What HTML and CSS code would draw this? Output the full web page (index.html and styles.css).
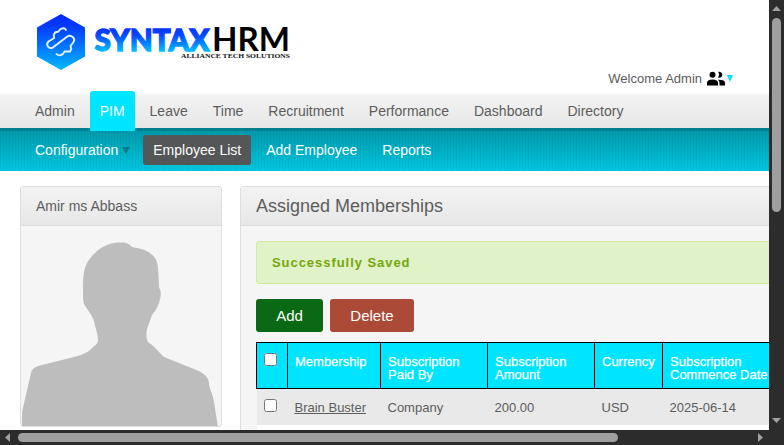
FILE: index.html
```html
<!DOCTYPE html>
<html lang="en">
<head>
<meta charset="utf-8">
<title>Assigned Memberships</title>
<link rel="stylesheet" href="styles.css">
</head>
<body>
<div class="window">
  <div class="page">
    <header class="header">
      <svg class="logo" width="262" height="62" viewBox="32 10 262 62">
        <defs>
          <linearGradient id="hex" x1="0" y1="0" x2="0" y2="1"><stop offset="0" stop-color="#0528ff"/><stop offset=".2" stop-color="#0538ff"/><stop offset="1" stop-color="#00b8ff"/></linearGradient>
          <linearGradient id="word" gradientUnits="userSpaceOnUse" x1="0" y1="27" x2="0" y2="51"><stop offset="0" stop-color="#0830ff"/><stop offset=".35" stop-color="#0848ff"/><stop offset="1" stop-color="#00bcff"/></linearGradient>
        </defs>
        <path d="M61 14L85 27.500V56.500L61 70L37 56.500V27.500Z" fill="url(#hex)"/>
        <path d="M66 30C64.500 27 60 28 58.500 31.500L55 32.500L53.700 35L54.200 38L48.500 41.500C45.500 44.500 48 49 52.500 47.800L67 36.700C71 34 76 38.500 73.500 42L70.500 46L71.300 49L70 51.500L64.500 51.500C63 55.500 58.500 56.500 56.500 54" fill="none" stroke="#e5f2ff" stroke-width="1.900" stroke-linejoin="round" stroke-linecap="round"/>
        <text class="logo-syntax" x="94.500" y="50.500" textLength="115" lengthAdjust="spacingAndGlyphs" fill="url(#word)" stroke="url(#word)">SYNTAX</text>
        <text class="logo-hrm" x="212" y="51" textLength="78" lengthAdjust="spacingAndGlyphs">HRM</text>
        <text class="logo-tag" x="181" y="58" textLength="109" lengthAdjust="spacingAndGlyphs">ALLIANCE TECH SOLUTIONS</text>
      </svg>
      <div class="welcome">
        <span>Welcome Admin</span>
        <svg width="18" height="15" viewBox="0 0 18 15"><circle cx="5.500" cy="3.700" r="3"/><path d="M11 .8C13.500 .2 15.300 1.700 15.300 3.700S13.500 7.200 11 6.500C12.400 4.800 12.400 2.500 11 .8ZM0 14.500V12Q0 8.500 5.500 8.500T11 12V14.500ZM12.500 14.500V12Q12.500 9.800 10.800 8.700Q18 8.400 18 12V14.500Z"/></svg>
        <svg class="caret" width="6" height="7" viewBox="0 0 6 7"><path d="M0 0H6L3 7Z" fill="#00e5ff"/></svg>
      </div>
    </header>
    <nav class="menu">
      <a>Admin</a><a class="current">PIM</a><a>Leave</a><a>Time</a><a>Recruitment</a><a>Performance</a><a>Dashboard</a><a>Directory</a>
    </nav>
    <nav class="submenu">
      <a>Configuration<svg class="arrow" width="8" height="7" viewBox="0 0 8 7"><path d="M0 0H8L4 7Z" fill="#087c8a"/></svg></a><a class="selected">Employee List</a><a>Add Employee</a><a>Reports</a>
    </nav>
    <main class="content">
      <section class="box profile">
        <h2>Amir ms Abbass</h2>
        <svg class="photo" width="200" height="200" viewBox="0 0 200 200">
          <path d="M1 200V185L10 146Q11 141 17 139L47 131.500C62 128 68 125 72 120Q77 117 77 113C77 107 74 100 73 94C71 88 66 82 63 77Q62 74 62 63C62 42 64 36 74 26C85 15 98 15 105 16Q109 17 111 20C121 22 128 23 134 31C137 36 137 40 137.500 48L138 60Q141 66 139 72C138 78 135 83 131 88L126 102C125 107 125 113 128 116C134 119 138 126 143 130L173 142C183 146 188 150 188 157C189 163 192 168 193 175L197 200Z" fill="#bdbdbd"/>
        </svg>
      </section>
      <section class="box memberships">
        <h1>Assigned Memberships</h1>
        <div class="inner">
          <div class="message">Successfully Saved</div>
          <div class="buttons"><button class="add">Add</button><button class="delete">Delete</button></div>
          <table>
            <colgroup><col class="c-check"><col class="c-name"><col class="c-wide"><col class="c-wide"><col class="c-currency"><col class="c-date"></colgroup>
            <thead><tr><th><input type="checkbox"></th><th>Membership</th><th>Subscription<br>Paid By</th><th>Subscription<br>Amount</th><th>Currency</th><th>Subscription<br>Commence Date</th></tr></thead>
            <tbody>
              <tr><td><input type="checkbox"></td><td><a>Brain Buster</a></td><td>Company</td><td>200.00</td><td>USD</td><td>2025-06-14</td></tr>
              <tr class="even"><td colspan="6"></td></tr>
            </tbody>
          </table>
        </div>
      </section>
    </main>
  </div>
  <div class="vbar">
    <svg width="15" height="18" viewBox="0 0 15 18"><path d="M3 11L7.500 6L12 11Z" fill="#a0a0a0"/></svg>
    <div class="vthumb"></div>
    <svg class="end" width="15" height="15" viewBox="0 0 15 15"><path d="M3 3H12L7.500 8Z" fill="#a0a0a0"/></svg>
  </div>
  <div class="hbar">
    <svg width="18" height="15" viewBox="0 0 18 15"><path d="M10 3V12L5 7.500Z" fill="#a0a0a0"/></svg>
    <div class="hthumb"></div>
    <svg class="end" width="15" height="15" viewBox="0 0 15 15"><path d="M4 3V12L9 7.500Z" fill="#a0a0a0"/></svg>
  </div>
  <div class="corner"></div>
</div>
</body>
</html>
```
FILE: styles.css
```css
* { box-sizing: border-box; }
body { margin: 0; overflow: hidden; font: 14px "Liberation Sans", Arial, sans-serif; color: #5d5d5d; background: #fff; }
svg { display: block; flex: none; }
.window { display: grid; grid-template: 430px 15px / 769px 15px; width: 784px; height: 445px; }
.page { overflow: hidden; min-width: 0; }
.header { display: flex; justify-content: space-between; align-items: flex-start; height: 94px; padding: 10px 36px 0 32px; }
.logo-syntax { font: 900 31px Lato, sans-serif; stroke-width: 1.4px; }
.logo-hrm { font: 700 32px Lato, sans-serif; fill: #000; }
.logo-tag { font: 700 6px "Liberation Serif", serif; fill: #111; }
.welcome { display: flex; align-items: center; margin-top: 60px; font-size: 13px; line-height: 17px; }
.welcome span { margin-right: 5px; }
.caret { margin-left: 2px; }
.menu { display: flex; height: 37px; padding-left: 25px; border-bottom: 3px solid #00808f; background: linear-gradient(#f3f3f3, #e7e7e7); }
.menu a { height: 34px; padding: 0 10px; margin-right: 5px; line-height: 34px; }
.menu .current { height: 40px; margin-top: -3px; line-height: 40px; border-radius: 3px 3px 0 0; background: #00e5ff; color: #fff; }
.submenu { display: flex; align-items: center; height: 40px; padding: 0 0 2px 25px; color: #fff; background: repeating-linear-gradient(90deg, rgba(0,60,80,.08) 0 1px, transparent 1px 3px), linear-gradient(#009aac, #00c7e0); }
.submenu a { display: flex; align-items: center; height: 30px; padding: 0 10px; margin-right: 5px; border-radius: 3px; }
.submenu .selected { background: #555658; }
.arrow { margin-left: 4px; margin-right: -2px; }
.content { display: flex; align-items: flex-start; gap: 18px; width: 1000px; padding: 15px 0 0 20px; }
.box { border: 1px solid #dedede; border-radius: 3px; background: #f5f5f5; }
.profile { width: 202px; height: 241px; overflow: hidden; }
.photo { margin-top: 1px; }
.memberships { width: 760px; height: 300px; }
h1, h2 { height: 39px; margin: 0; padding-left: 15px; border-bottom: 1px solid #dedede; background: linear-gradient(#f3f3f3, #e7e7e7); font-weight: 400; line-height: 38px; }
h1 { font-size: 18px; }
h2 { font-size: 14px; }
.inner { padding: 15px; }
.message { height: 43px; padding-left: 15px; border: 1px solid #cdea9f; border-radius: 3px; background: #dff2c8; color: #77a60b; font-size: 13px; font-weight: 700; line-height: 41px; letter-spacing: .95px; }
.buttons { display: flex; gap: 7px; margin: 15px 0 10px; }
button { height: 33px; border: 0; padding: 0; border-radius: 3px; color: #fff; font: 15px "Liberation Sans", Arial, sans-serif; }
.add { width: 67px; background: #0a6914; }
.delete { width: 84px; background: #aa4a37; }
table { width: 521px; table-layout: fixed; border-collapse: collapse; font-size: 13px; }
.c-check { width: 31px; }
.c-name { width: 93px; }
.c-wide { width: 107px; }
.c-currency { width: 68px; }
.c-date { width: 115px; }
th { height: 46px; padding: 12px 0 0 7px; border: 1px solid #000; background: #00e5ff; color: #fff; font-weight: 400; line-height: 13px; text-align: left; vertical-align: top; white-space: nowrap; -webkit-text-stroke: .25px #fff; }
td { height: 36px; padding: 1px 0 0 7px; background: #e9e9e9; }
td a { text-decoration: underline; }
.even td { background: #fff; }
input { display: block; width: 13px; height: 13px; margin: 0; }
th input { margin-top: -2px; }
td input { margin-top: -4px; }
.vbar, .hbar { display: flex; background: #2c2c2c; }
.vbar { flex-direction: column; }
.vthumb { width: 9px; height: 194px; margin-left: 3px; border-radius: 5px; background: #9f9f9f; }
.hthumb { width: 600px; height: 9px; margin-top: 3px; border-radius: 5px; background: #9f9f9f; }
.vbar .end { margin-top: auto; }
.hbar .end { margin-left: auto; }
.corner { background: #2c2c2c; }
```
